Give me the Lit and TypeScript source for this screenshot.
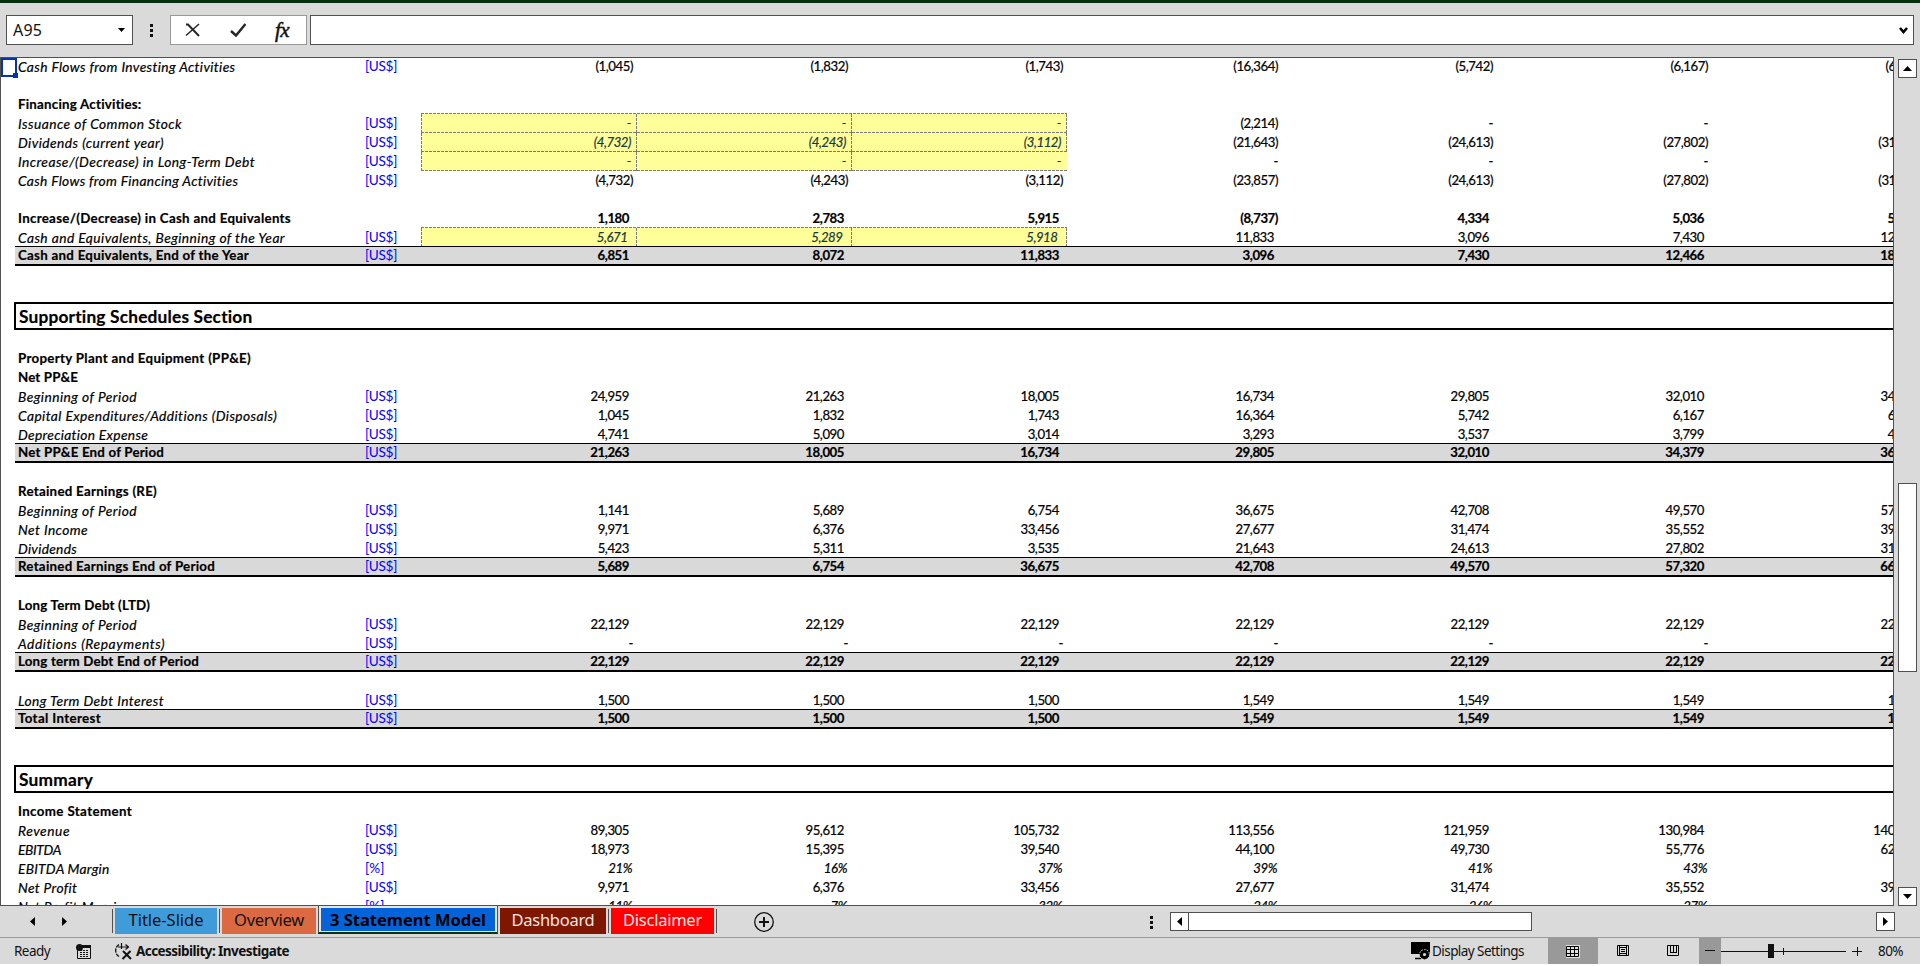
import { LitElement, html, css, svg, nothing } from "lit";
import { customElement, property } from "lit/decorators.js";
import { classMap } from "lit/directives/class-map.js";

/** A run of text whose letter spacing is tuned so that it takes `w` pixels. */
@customElement("fit-text")
class FitText extends LitElement {
  static styles = css`
    :host { display: inline-block; white-space: pre; }
  `;
  @property() text = "";
  @property({ type: Number }) w = 0;
  render() {
    return html`<span>${this.text}</span>`;
  }
  updated() {
    const span = this.renderRoot.querySelector("span")!;
    span.style.letterSpacing = "0";
    const natural = span.getBoundingClientRect().width;
    if (natural && this.w) {
      span.style.letterSpacing = `${(this.w - natural) / this.text.length}px`;
    }
  }
}

type Row = {
  kind: "blank" | "gap" | "head" | "line" | "total" | "section";
  label?: string;
  w?: number;
  unit?: string;
  values?: string[];
  bold?: boolean;
  italic?: boolean;
  input?: boolean;
  first?: boolean;
  open?: boolean;
};

const U = "[US$]";
const v = (s: string) => s.split(" ");
const blank: Row = { kind: "blank" };
const head = (label: string, w: number): Row => ({ kind: "head", label, w });
const line = (label: string, w: number, s: string, extra: Partial<Row> = {}): Row => ({ kind: "line", label, w, unit: U, values: v(s), ...extra });
const total = (label: string, w: number, s: string): Row => ({ kind: "total", label, w, unit: U, values: v(s) });
const section = (label: string, w: number): Row => ({ kind: "section", label, w });

const ROWS: Row[] = [
  line("Cash Flows from Investing Activities", 217, "(1,045) (1,832) (1,743) (16,364) (5,742) (6,167) (6,617)"),
  blank,
  head("Financing Activities:", 124),
  line("Issuance of Common Stock", 164, "- - - (2,214) - - -", { input: true, first: true }),
  line("Dividends (current year)", 146, "(4,732) (4,243) (3,112) (21,643) (24,613) (27,802) (31,223)", { input: true }),
  line("Increase/(Decrease) in Long-Term Debt", 237, "- - - - - - -", { input: true, open: true }),
  line("Cash Flows from Financing Activities", 220, "(4,732) (4,243) (3,112) (23,857) (24,613) (27,802) (31,223)"),
  blank,
  { kind: "line", label: "Increase/(Decrease) in Cash and Equivalents", w: 273, bold: true, values: v("1,180 2,783 5,915 (8,737) 4,334 5,036 5,779") },
  line("Cash and Equivalents, Beginning of the Year", 267, "5,671 5,289 5,918 11,833 3,096 7,430 12,466", { input: true, first: true }),
  total("Cash and Equivalents, End of the Year", 231, "6,851 8,072 11,833 3,096 7,430 12,466 18,245"),
  blank,
  blank,
  section("Supporting Schedules Section", 234),
  blank,
  head("Property Plant and Equipment (PP&E)", 233),
  head("Net PP&E", 60),
  line("Beginning of Period", 119, "24,959 21,263 18,005 16,734 29,805 32,010 34,379"),
  line("Capital Expenditures/Additions (Disposals)", 259, "1,045 1,832 1,743 16,364 5,742 6,167 6,617"),
  line("Depreciation Expense", 130, "4,741 5,090 3,014 3,293 3,537 3,799 4,080"),
  total("Net PP&E End of Period", 146, "21,263 18,005 16,734 29,805 32,010 34,379 36,916"),
  blank,
  head("Retained Earnings (RE)", 139),
  line("Beginning of Period", 119, "1,141 5,689 6,754 36,675 42,708 49,570 57,320"),
  line("Net Income", 70, "9,971 6,376 33,456 27,677 31,474 35,552 39,927"),
  line("Dividends", 59, "5,423 5,311 3,535 21,643 24,613 27,802 31,223"),
  total("Retained Earnings End of Period", 197, "5,689 6,754 36,675 42,708 49,570 57,320 66,024"),
  blank,
  head("Long Term Debt (LTD)", 132),
  line("Beginning of Period", 119, "22,129 22,129 22,129 22,129 22,129 22,129 22,129"),
  line("Additions (Repayments)", 147, "- - - - - - -"),
  total("Long term Debt End of Period", 181, "22,129 22,129 22,129 22,129 22,129 22,129 22,129"),
  blank,
  line("Long Term Debt Interest", 146, "1,500 1,500 1,500 1,549 1,549 1,549 1,549"),
  total("Total Interest", 83, "1,500 1,500 1,500 1,549 1,549 1,549 1,549"),
  blank,
  blank,
  section("Summary", 74),
  { kind: "gap" },
  head("Income Statement", 114),
  line("Revenue", 52, "89,305 95,612 105,732 113,556 121,959 130,984 140,677"),
  line("EBITDA", 43, "18,973 15,395 39,540 44,100 49,730 55,776 62,270"),
  line("EBITDA Margin", 91.5, "21% 16% 37% 39% 41% 43% 44%", { unit: "[%]", italic: true }),
  line("Net Profit", 59, "9,971 6,376 33,456 27,677 31,474 35,552 39,927"),
  line("Net Profit Margin", 106, "11% 7% 32% 24% 26% 27% 28%", { unit: "[%]", italic: true }),
];

@customElement("sheet-grid")
class SheetGrid extends LitElement {
  static styles = css`
    :host {
      display: block;
      box-sizing: border-box;
      position: relative;
      overflow: hidden;
      background: #fff;
      border: 1px solid #505050;
      font: 13px/19px Lato, "Noto Sans", sans-serif;
      color: #000;
    }
    .rows { display: flex; flex-direction: column; width: 1925px; margin-top: -1px; padding-left: 14px; box-sizing: border-box; }
    .row { flex: none; display: grid; grid-template-columns: 348px 59px repeat(7, 215px); height: 19px; box-sizing: border-box; white-space: pre; }
    .gap { height: 9px; }
    .label { padding-left: 3px; font-style: italic; font-size: 13.8px; -webkit-text-stroke: 0.2px #000; }
    .unit { padding-left: 2px; color: #0000ff; font-size: 13.6px; }
    .num { text-align: right; padding-right: 8px; font-size: 13.2px; letter-spacing: -0.45px; box-sizing: border-box; -webkit-text-stroke: 0.2px currentColor; }
    .num.edge { padding-right: 4px; }
    .bold .label, .head .label, .total .label { font-weight: 700; font-style: normal; font-size: 13.3px; }
    .bold .num, .total .num { font-weight: 700; }
    .italic .num { font-style: italic; padding-right: 5px; }
    .total { background: #d9d9d9; border-bottom: 2px solid #000; line-height: 17px; box-shadow: 0 -1px 0 #000; z-index: 1; }
    .section { height: 28px; margin: -2px 0 0 -1px; border: 2px solid #000; border-right: 0; font-weight: 700; line-height: 25px; display: block; }
    .section .label { font-style: normal; font-size: 17.3px; padding-left: 3px; }
    .input .entry {
      font-style: italic;
      color: #17393a;
      background:
        repeating-linear-gradient(90deg, #7a7a7a 0 3px, transparent 3px 4px) 0 100% / 100% 1px no-repeat,
        repeating-linear-gradient(180deg, #7a7a7a 0 3px, transparent 3px 4px) 100% 0 / 1px 100% no-repeat,
        #ffff99;
      padding-right: 9.500px;
    }
    .input .entry.edge { padding-right: 6px; }
    .input .entry.lead {
      margin-left: -1px;
      background:
        repeating-linear-gradient(90deg, #7a7a7a 0 3px, transparent 3px 4px) 0 100% / 100% 1px no-repeat,
        repeating-linear-gradient(180deg, #7a7a7a 0 3px, transparent 3px 4px) 100% 0 / 1px 100% no-repeat,
        repeating-linear-gradient(180deg, #7a7a7a 0 3px, transparent 3px 4px) 0 0 / 1px 100% no-repeat,
        #ffff99;
    }
    .open .entry.last {
      background: repeating-linear-gradient(90deg, #7a7a7a 0 3px, transparent 3px 4px) 0 100% / 100% 1px no-repeat, #ffff99;
    }
    .ruled { position: relative; }
    .ruled::before {
      content: "";
      position: absolute;
      left: 406px;
      top: -1px;
      width: 646px;
      height: 1px;
      background: repeating-linear-gradient(90deg, #7a7a7a 0 3px, #fff 3px 4px);
    }
    .cursor { position: absolute; left: 0; top: 0; width: 16px; height: 19px; box-sizing: border-box; border: 2px solid #0533b3; }
    .cursor::after { content: ""; position: absolute; right: -3px; bottom: -3px; width: 5px; height: 5px; background: #0533b3; }
  `;

  cell(r: Row, s: string, i: number) {
    return html`<div class=${classMap({
      num: true,
      edge: s === "-" || s.startsWith("("),
      entry: !!r.input && i < 3,
      lead: !!r.input && i === 0,
      last: i === 2,
    })}>${s}</div>`;
  }

  row(r: Row) {
    return html`<div class=${classMap({
      row: true,
      [r.kind]: true,
      bold: !!r.bold,
      italic: !!r.italic,
      input: !!r.input,
      open: !!r.open,
      ruled: !!r.first,
    })}>${r.label
      ? html`<div class="label"><fit-text .text=${r.label} .w=${r.w ?? 0}></fit-text></div>
          ${r.kind === "section" ? nothing : html`<div class="unit">${r.unit ? html`<fit-text .text=${r.unit} .w=${r.unit === U ? 32 : 19.5}></fit-text>` : nothing}</div>`}
          ${(r.values ?? []).map((s, i) => this.cell(r, s, i))}`
      : nothing}</div>`;
  }

  render() {
    return html`<div class="rows">${ROWS.map((r) => this.row(r))}</div><div class="cursor"></div>`;
  }
}

const icon = (w: number, h: number, body: unknown) =>
  html`<svg width=${w} height=${h} viewBox="0 0 ${w} ${h}" fill="none">${body}</svg>`;

const up = icon(9, 5, svg`<path d="M4.5 0 9 5H0z" fill="#000"/>`);
const down = icon(9, 5, svg`<path d="M0 0h9L4.5 5z" fill="#000"/>`);
const leftArrow = icon(5, 9, svg`<path d="M5 0v9L0 4.5z" fill="#000"/>`);
const rightArrow = icon(5, 9, svg`<path d="M0 0v9l5-4.5z" fill="#000"/>`);
const dots = icon(3, 13, svg`<path d="M0 0h3v3H0zM0 5h3v3H0zM0 10h3v3H0z" fill="#111"/>`);

@customElement("app-root")
class AppRoot extends LitElement {
  static styles = css`
    :host { display: flex; flex-direction: column; width: 1920px; height: 966px; overflow: hidden; background: #fff; font-family: "Noto Sans", "Open Sans", sans-serif; color: #111; }
    svg { display: block; flex: none; }
    .frame { display: flex; flex-direction: column; height: 964px; background: #dadada; box-sizing: border-box; border-top: 3px solid #06300f; }
    .formula { display: flex; height: 54px; box-sizing: border-box; padding: 12px 6px 12px 6px; }
    .namebox { width: 127px; box-sizing: border-box; border: 1px solid #505050; background: #fff; display: flex; align-items: center; justify-content: space-between; padding: 0 7px 0 6px; font-size: 16px; }
    .grip { width: 37px; display: flex; align-items: center; justify-content: center; }
    .tools { width: 137px; margin-right: 3px; box-sizing: border-box; border: 1px solid #999; background: #fff; display: flex; align-items: center; padding-left: 14px; }
    .tools svg + svg { margin-left: 30px; }
    .fx { margin-left: 29px; font: italic 400 21px/24px "Liberation Serif", serif; letter-spacing: -0.500px; -webkit-text-stroke: 0.500px #111; }
    .entrybar { flex: 1; border: 1px solid #505050; background: #fff; display: flex; align-items: center; justify-content: flex-end; padding-right: 5px; }
    .body { display: flex; height: 849px; }
    sheet-grid { width: 1894px; }
    .vscroll { width: 26px; display: flex; flex-direction: column; align-items: flex-start; box-sizing: border-box; padding: 2px 0 0 4px; }
    .btn { width: 19px; height: 19px; box-sizing: border-box; border: 1px solid #505050; background: #fff; display: flex; align-items: center; justify-content: center; }
    .vthumb { width: 19px; height: 189px; margin: 405px 0 215px; box-sizing: border-box; border: 1px solid #505050; background: #fff; }
    .tabbar { height: 31px; display: flex; align-items: flex-start; }
    .nav { width: 112px; height: 31px; box-sizing: border-box; display: flex; align-items: center; padding: 0 0 0 30px; gap: 27px; }
    .tab { height: 26px; margin-top: 2px; display: flex; justify-content: center; font-size: 16.500px; line-height: 23px; }
    .sep { width: 1px; height: 24px; margin: 3px 2px 0; background: #505050; }
    .sep.start { margin-left: 0; }
    .title { width: 102px; background: #409bdb; }
    .over { width: 94px; background: #db6a43; }
    .active { height: 29px; width: 180px; margin: -1px 2px 0; box-sizing: border-box; border: 1px solid #505050; border-top: 0; border-bottom: 2px solid #06300f; background: #e6e6e6; padding: 3px 2px 1px; display: flex; }
    .active .tab { flex: 1; height: 23px; margin: 0; background: #0563da; color: #000; font-weight: 700; }
    .dash { width: 106px; background: #7f1600; color: #f5e6e2; }
    .disc { width: 103px; background: #ff0000; color: #ffe6e6; }
    .add { margin: 6px 0 0 35px; }
    .spring { flex: 1; }
    .hdots { margin: 10px 17px 0 0; }
    .hscroll { display: flex; margin: 6px 25px 0 0; }
    .hthumb { width: 344px; height: 19px; margin: 0 344px 0 -1px; box-sizing: border-box; border: 1px solid #505050; background: #fff; }
    .status { height: 27px; box-sizing: border-box; border-top: 1px solid #999; display: flex; align-items: center; font-size: 13.500px; line-height: 26px; }
    .ready { margin-left: 14px; }
    .macro { margin-left: 26px; }
    .acc { margin-left: 22px; }
    .acc-text { margin-left: 3px; font-weight: 700; }
    .disp-text { margin-left: 2px; width: 93px; }
    .view { height: 26px; width: 50px; display: flex; align-items: center; justify-content: center; }
    .view.on, .minus { background: #999; }
    .v1 { margin-left: 23px; }
    .minus { width: 22px; height: 26px; display: flex; align-items: center; justify-content: center; }
    .views-gap { width: 1px; }
    .zoom { margin-left: 16px; width: 42px; }
  `;

  render() {
    return html`
      <div class="frame">
        <div class="formula">
          <div class="namebox"><fit-text text="A95" .w=${29}></fit-text>${icon(7, 4, svg`<path d="M0 0h7L3.5 4z" fill="#000"/>`)}</div>
          <div class="grip">${dots}</div>
          <div class="tools">
            ${icon(15, 14, svg`<path d="M1 1.500h2l11 11.500" stroke="#262626" stroke-width="2"/><path d="M14 1 1 12.500" stroke="#262626" stroke-width="1.500"/>`)}
            ${icon(16, 14, svg`<path d="M1 8l5 4.500L15.500 1" stroke="#262626" stroke-width="2.500"/>`)}
            <span class="fx">fx</span>
          </div>
          <div class="entrybar">${icon(9, 7, svg`<path d="M1 1l3.500 4L8 1" stroke="#000" stroke-width="2.600"/>`)}</div>
        </div>
        <div class="body">
          <sheet-grid></sheet-grid>
          <div class="vscroll">
            <div class="btn">${up}</div>
            <div class="vthumb"></div>
            <div class="btn">${down}</div>
          </div>
        </div>
        <div class="tabbar">
          <div class="nav">${leftArrow}${rightArrow}</div>
          <div class="sep start"></div>
          <div class="tab title"><fit-text text="Title-Slide" .w=${75}></fit-text></div>
          <div class="sep"></div>
          <div class="tab over"><fit-text text="Overview" .w=${70}></fit-text></div>
          <div class="active"><div class="tab"><fit-text text="3 Statement Model" .w=${156}></fit-text></div></div>
          <div class="tab dash"><fit-text text="Dashboard" .w=${83}></fit-text></div>
          <div class="sep"></div>
          <div class="tab disc"><fit-text text="Disclaimer" .w=${79}></fit-text></div>
          <div class="sep"></div>
          <div class="add">${icon(20, 20, svg`<circle cx="10" cy="10" r="9.300" stroke="#111" stroke-width="1.300"/><path d="M10 5v10M5 10h10" stroke="#111" stroke-width="2"/>`)}</div>
          <div class="spring"></div>
          <div class="hdots">${dots}</div>
          <div class="hscroll">
            <div class="btn">${leftArrow}</div>
            <div class="hthumb"></div>
            <div class="btn">${rightArrow}</div>
          </div>
        </div>
        <div class="status">
          <fit-text class="ready" text="Ready" .w=${36}></fit-text>
          <span class="macro">${icon(15, 15, svg`<path d="M1.500 6v8.500h13v-12" stroke="#111"/><path d="M6 1h9v3H6z" fill="#111"/><circle cx="3.500" cy="3.500" r="3.500" fill="#111"/><path d="M4 6.500h9M4 8.500h9M4 10.500h9M4 12.500h9" stroke="#111" stroke-dasharray="2 1"/>`)}</span>
          <span class="acc">${icon(20, 18, svg`<path d="M6 2.500A7 7 0 0 0 6 14.500" stroke="#111" stroke-width="1.400" stroke-dasharray="4 1.200"/><path d="M5 5h10M12.500 2.500 15.500 5l-3 2.500M8.500 1v6" stroke="#111" stroke-width="1.200"/><path d="M10 9l8 8M17.500 9 9.500 17" stroke="#111" stroke-width="2"/>`)}</span>
          <fit-text class="acc-text" text="Accessibility: Investigate" .w=${153}></fit-text>
          <div class="spring"></div>
          ${icon(19, 18, svg`<path d="M0 0h19v12H0z" fill="#000"/><path d="M4 16.500h6" stroke="#000" stroke-width="1.500"/><circle cx="13.500" cy="12.500" r="5" fill="#000" stroke="#dadada" stroke-dasharray="1.600 1.200"/><circle cx="13.500" cy="12.500" r="1.600" fill="#dadada"/>`)}
          <span class="disp-text"><fit-text text="Display Settings" .w=${92}></fit-text></span>
          <div class="view on v1">${icon(14, 13, svg`<path d="M0 0h14v13H0z" fill="#e0e0e0"/><path d="M.500 1.500h12v10H.500zM.500 4.500h12M.500 8.500h12M4.500 1.500v10M8.500 1.500v10" stroke="#000"/>`)}</div>
          <div class="view">${icon(12, 12, svg`<path d="M.500.500h11v10H.500zM2.500 1v9.500M9.500 1v9.500M2.500 2.500h7M4 4.500h4M4 6.500h4M2.500 8.500h7" stroke="#000"/>`)}</div>
          <div class="view">${icon(12, 12, svg`<path d="M.500.500h11v10H.500zM3.500 1v6.500M6.500 1v6.500M9.500 1v6.500M3 7.500h7" stroke="#000"/>`)}</div>
          <div class="views-gap"></div>
          <div class="minus">${icon(10, 2, svg`<path d="M0 .500h10" stroke="#111"/>`)}</div>
          ${icon(125, 16, svg`<path d="M0 8.500h125M62.500 5v7" stroke="#111"/><path d="M47 1h6v14h-6z" fill="#111"/>`)}
          ${icon(16, 10, svg`<path d="M6 5.500h10M11.500 1v9" stroke="#111"/>`)}
          <span class="zoom"><fit-text text="80%" .w=${25}></fit-text></span>
        </div>
      </div>
    `;
  }
}
